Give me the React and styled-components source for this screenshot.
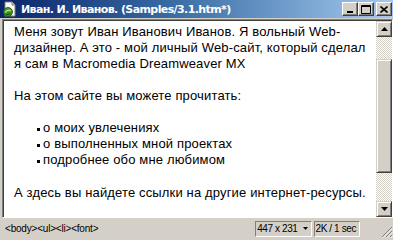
import React from "react";
import styled, { createGlobalStyle } from "styled-components";

const Global = createGlobalStyle`
  html, body { margin: 0; padding: 0; background: #D4D0C8; overflow: hidden; }
  * { box-sizing: border-box; }
`;

const Window = styled.div`
  width: 393px;
  height: 240px;
  background: #D4D0C8;
  display: flex;
  flex-direction: column;
  overflow: hidden;
`;

const TitleBar = styled.div`
  height: 18px;
  flex: none;
  display: flex;
  align-items: center;
  padding: 0 1px 0 2px;
  background: linear-gradient(to right, #0A246A 0%, #3A6EA5 45%, #A6CAF0 100%);
`;

const TitleText = styled.div`
  flex: 1;
  margin-left: 3px;
  color: #fff;
  font-family: "DejaVu Sans", "Liberation Sans", sans-serif;
  font-weight: bold;
  font-size: 11px;
  letter-spacing: -0.6px;
  white-space: nowrap;
  overflow: hidden;
`;

const Buttons = styled.div`
  display: flex;
  align-items: center;
`;

const CapButton = styled.div`
  width: 16px;
  height: 14px;
  margin-left: ${(p) => (p.$gap ? "2px" : "0")};
  background: #D4D0C8;
  border-top: 1px solid #fff;
  border-left: 1px solid #fff;
  border-right: 1px solid #404040;
  border-bottom: 1px solid #404040;
  box-shadow: inset -1px -1px 0 #808080;
  display: flex;
  align-items: center;
  justify-content: center;
`;

const Body = styled.div`
  flex: 1;
  display: flex;
  margin: 1px 0 1px 2px;
  border-top: 1px solid #808080;
  border-left: 1px solid #808080;
  border-right: 1px solid #fff;
  border-bottom: 1px solid #fff;
  min-height: 0;
`;

const Inner = styled.div`
  flex: 1;
  display: flex;
  border-top: 1px solid #404040;
  border-left: 1px solid #404040;
  min-height: 0;
`;

const Doc = styled.div`
  flex: 1;
  background: #fff;
  padding: 3px 6px 0 10px;
  overflow: hidden;
  font-family: "Liberation Sans", Arial, sans-serif;
  font-size: 13px;
  line-height: 16px;
  letter-spacing: 0.15px;
  color: #000;
`;

const P = styled.p`
  margin: 0 0 16px 0;
`;

const List = styled.ul`
  margin: 0 0 17px 0;
  padding: 0 0 0 23px;
  list-style: none;
`;

const Item = styled.li`
  position: relative;
  padding-left: 6px;
  &::before {
    content: "";
    position: absolute;
    left: 0;
    top: 8px;
    width: 3px;
    height: 3px;
    background: #000;
  }
`;

const ScrollBar = styled.div`
  width: 16px;
  flex: none;
  display: flex;
  flex-direction: column;
  background-color: #fff;
  background-image: conic-gradient(#D4D0C8 25%, #fff 0 50%, #D4D0C8 0 75%, #fff 0);
  background-size: 2px 2px;
`;

const Raised = styled.div`
  width: 16px;
  height: ${(p) => p.$h}px;
  flex: none;
  background: #D4D0C8;
  border-top: 1px solid #D4D0C8;
  border-left: 1px solid #D4D0C8;
  border-right: 1px solid #404040;
  border-bottom: 1px solid #404040;
  box-shadow: inset 1px 1px 0 #fff, inset -1px -1px 0 #808080;
  display: flex;
  align-items: center;
  justify-content: center;
`;

const Track = styled.div`
  height: ${(p) => p.$h}px;
  flex: none;
`;

const Fill = styled.div`
  flex: 1;
`;

const StatusBar = styled.div`
  height: 21px;
  flex: none;
  display: flex;
  align-items: center;
  padding: 0 0 2px 5px;
  font-family: "Liberation Sans", Arial, sans-serif;
  font-size: 10px;
  color: #000;
`;

const Tags = styled.div`
  flex: 1;
  letter-spacing: -0.2px;
`;

const Field = styled.div`
  height: 16px;
  display: flex;
  align-items: center;
  padding: 0 3px 0 1px;
  margin-left: ${(p) => p.$ml || 0}px;
  border-top: 1px solid #808080;
  border-left: 1px solid #808080;
  border-right: 1px solid #fff;
  border-bottom: 1px solid #fff;
  white-space: nowrap;
  letter-spacing: -0.4px;
  gap: 5px;
`;

const Grip = styled.div`
  width: 15px;
  height: 19px;
  margin-left: 18px;
  display: flex;
  align-items: flex-end;
  justify-content: flex-end;
`;

function DocIcon() {
  return (
    <svg width="16" height="16" viewBox="0 0 16 16">
      <path d="M3 1h7l3 3v11H3z" fill="#fff" stroke="#808080" />
      <path d="M10 1v3h3" fill="#D4D0C8" stroke="#808080" />
      <circle cx="6" cy="11" r="4.5" fill="#3C9A1E" stroke="#1E4A10" strokeWidth="0.8" />
      <path d="M3.5 11.5c1-2.5 3.5-3 5-1.5" fill="none" stroke="#CFF0A0" strokeWidth="1.2" />
      <path d="M4 13c1.5 0.8 3 0.6 4.5-0.8" fill="none" stroke="#0F3308" strokeWidth="1" />
    </svg>
  );
}

const Arrow = ({ up }) => (
  <svg width="7" height="4" viewBox="0 0 7 4">
    {up ? <path d="M3.5 0L7 4H0z" fill="#000" /> : <path d="M0 0h7L3.5 4z" fill="#000" />}
  </svg>
);

export default function App() {
  return (
    <>
      <Global />
      <Window>
        <TitleBar>
          <DocIcon />
          <TitleText>Иван. И. Иванов. (Samples/3.1.htm*)</TitleText>
          <Buttons>
            <CapButton>
              <svg width="8" height="8" viewBox="0 0 8 8"><rect x="1" y="6" width="6" height="2" fill="#000" /></svg>
            </CapButton>
            <CapButton>
              <svg width="10" height="9" viewBox="0 0 10 9"><path d="M0.5 0.5h9v8h-9z M0.5 1.5h9" fill="none" stroke="#000" /></svg>
            </CapButton>
            <CapButton $gap>
              <svg width="8" height="7" viewBox="0 0 8 7"><path d="M0.5 0.5l7 6M7.5 0.5l-7 6" stroke="#000" strokeWidth="1.6" /></svg>
            </CapButton>
          </Buttons>
        </TitleBar>
        <Body>
          <Inner>
            <Doc>
              <P>
                Меня зовут Иван Иванович Иванов. Я вольный Web-дизайнер. А это - мой личный Web-сайт, который сделал я сам в Macromedia Dreamweaver MX
              </P>
              <P>На этом сайте вы можете прочитать:</P>
              <List>
                <Item>о моих увлечениях</Item>
                <Item>о выполненных мной проектах</Item>
                <Item>подробнее обо мне любимом</Item>
              </List>
              <P>А здесь вы найдете ссылки на другие интернет-ресурсы.</P>
            </Doc>
            <ScrollBar>
              <Raised $h={16}><Arrow up /></Raised>
              <Track $h={22} />
              <Raised $h={114} />
              <Fill />
              <Raised $h={16}><Arrow /></Raised>
            </ScrollBar>
          </Inner>
        </Body>
        <StatusBar>
          <Tags>&lt;body&gt;&lt;ul&gt;&lt;li&gt;&lt;font&gt;</Tags>
          <Field>
            447 x 231
            <svg width="5" height="3" viewBox="0 0 5 3"><path d="M0 0h5L2.5 3z" fill="#000" /></svg>
          </Field>
          <Field $ml={2}>2K / 1 sec</Field>
          <Grip>
            <svg width="12" height="12" viewBox="0 0 12 12">
              <path d="M11 1L1 11M11 5L5 11M11 9L9 11" stroke="#808080" strokeWidth="1" />
              <path d="M11.8 1.8L1.8 11.8M11.8 5.8L5.8 11.8M11.8 9.8L9.8 11.8" stroke="#fff" strokeWidth="0.8" />
            </svg>
          </Grip>
        </StatusBar>
      </Window>
    </>
  );
}
